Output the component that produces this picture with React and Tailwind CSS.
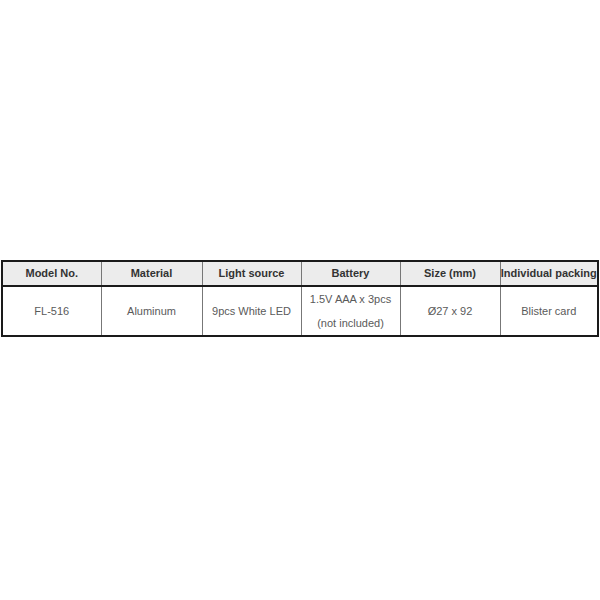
import React from 'react';

const headers = ['Model No.', 'Material', 'Light source', 'Battery', 'Size (mm)', 'Individual packing'];
const widths = ['w-[99px]', 'w-[101px]', 'w-[99px]', 'w-[99px]', 'w-[100px]', 'w-[98px]'];

const App = () => {
    return (
        <div className="w-[600px] h-[600px] bg-white pt-[260px]" style={{ fontFamily: '"Liberation Sans", Arial, sans-serif' }}>
            <table className="ml-px w-[597px] table-fixed border-collapse border-2 border-[#1a1a1a] text-[11px] text-center">
                <colgroup>
                    {widths.map((w, i) => (
                        <col key={i} className={w} />
                    ))}
                </colgroup>
                <thead>
                    <tr className="bg-[#ececec] h-[25px]">
                        {headers.map((h, i) => (
                            <th
                                key={h}
                                className={`font-bold text-[#333] p-0 border-b-2 border-b-[#1a1a1a] whitespace-nowrap ${i > 0 ? 'border-l border-l-[#777]' : ''}`}
                            >
                                {h}
                            </th>
                        ))}
                    </tr>
                </thead>
                <tbody>
                    <tr className="h-[48px] text-[#5a5a5a] leading-[24px]">
                        <td className="p-0">FL-516</td>
                        <td className="p-0 border-l border-l-[#777]">Aluminum</td>
                        <td className="p-0 border-l border-l-[#777]">9pcs White LED</td>
                        <td className="p-0 border-l border-l-[#777]">
                            <div>1.5V AAA x 3pcs</div>
                            <div>(not included)</div>
                        </td>
                        <td className="p-0 border-l border-l-[#777]">Ø27 x 92</td>
                        <td className="p-0 border-l border-l-[#777]">Blister card</td>
                    </tr>
                </tbody>
            </table>
        </div>
    );
};

export default App;
